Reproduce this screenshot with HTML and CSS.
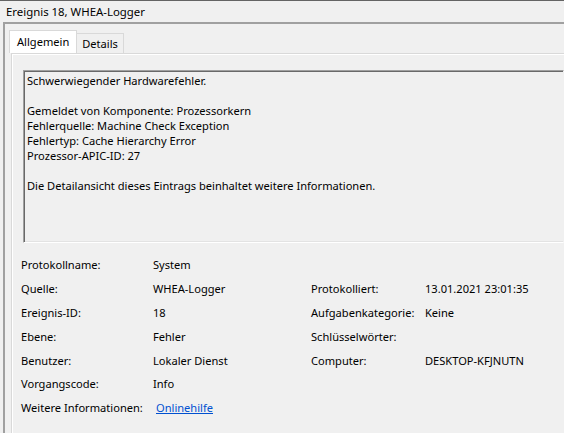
FILE: index.html
```html
<!DOCTYPE html>
<html lang="de">
<head>
    <meta charset="UTF-8">
    <title>Ereignis 18, WHEA-Logger</title>
    <link rel="stylesheet" href="styles.css">
</head>
<body>
    <!-- Title -->
    <div class="title-bar">Ereignis 18, WHEA-Logger</div>

    <div class="frame">
        <!-- Tabs -->
        <div class="tabs">
            <div class="tab active">Allgemein</div>
            <div class="tab">Details</div>
        </div>

        <div class="tab-page">
            <div class="message-box">
                <p>Schwerwiegender Hardwarefehler.</p>
                <p>Gemeldet von Komponente: Prozessorkern<br>
                Fehlerquelle: Machine Check Exception<br>
                Fehlertyp: Cache Hierarchy Error<br>
                Prozessor-APIC-ID: 27</p>
                <p>Die Detailansicht dieses Eintrags beinhaltet weitere Informationen.</p>
            </div>

            <!-- Event properties -->
            <div class="props">
                <div>Protokollname:</div>
                <div>System</div>
                <div></div>
                <div></div>

                <div>Quelle:</div>
                <div>WHEA-Logger</div>
                <div>Protokolliert:</div>
                <div>13.01.2021 23:01:35</div>

                <div>Ereignis-ID:</div>
                <div>18</div>
                <div>Aufgabenkategorie:</div>
                <div>Keine</div>

                <div>Ebene:</div>
                <div>Fehler</div>
                <div>Schlüsselwörter:</div>
                <div></div>

                <div>Benutzer:</div>
                <div>Lokaler Dienst</div>
                <div>Computer:</div>
                <div>DESKTOP-KFJNUTN</div>

                <div>Vorgangscode:</div>
                <div>Info</div>
                <div></div>
                <div></div>

                <div>Weitere Informationen:</div>
                <div><a class="help-link" href="#">Onlinehilfe</a></div>
                <div></div>
                <div></div>
            </div>
        </div>
    </div>
</body>
</html>
```

FILE: styles.css
```css
body {
    margin: 0;
    font-family: "Noto Sans", Arial, sans-serif;
    font-size: 11.1px;
    color: #000;
    background-color: #f0f0f0;
    overflow: hidden;
    width: 564px;
    height: 433px;
}
.title-bar {
    border-top: 1px solid #646464;
    height: 21px;
    line-height: 21px;
    padding-left: 6px;
    font-size: 11.4px;
}
.frame {
    margin-left: 3px;
    height: 409px;
    border-top: 2px solid #a0a0a0;
    border-left: 2px solid #a0a0a0;
    overflow: hidden;
}
.tabs {
    display: flex;
    align-items: flex-end;
    padding-top: 6px;
    padding-left: 4px;
    height: 23px;
}
.tab {
    border: 1px solid #d9d9d9;
    border-bottom: none;
    height: 19px;
    line-height: 19px;
    padding: 0 5px;
    margin-left: -1px;
}
.tab.active {
    background-color: #fff;
    height: 22px;
    line-height: 22px;
    padding: 0 7px;
    margin-left: 0;
    position: relative;
    z-index: 1;
}
.tab-page {
    margin-left: 6px;
    border-top: 1px solid #d9d9d9;
    border-left: 1px solid #d9d9d9;
    box-shadow: inset 1px 1px 0 #fff;
    height: 384px;
    padding: 16px 0 0 11px;
}
.message-box {
    height: 167px;
    border: 1px solid;
    border-color: #a0a0a0 transparent #fff #a0a0a0;
    box-shadow: inset 1px 1px 0 #696969, inset 0 -1px 0 #e3e3e3;
    padding: 2px 3px;
    line-height: 15px;
}
.message-box p {
    margin: 0 0 15px 0;
}
.props {
    display: grid;
    grid-template-columns: 132px 158px 114px auto;
    grid-auto-rows: 23.8px;
    align-items: center;
    margin-top: 10px;
    margin-left: -2px;
}
.help-link {
    color: #0050d0;
    margin-left: 3px;
}
```
